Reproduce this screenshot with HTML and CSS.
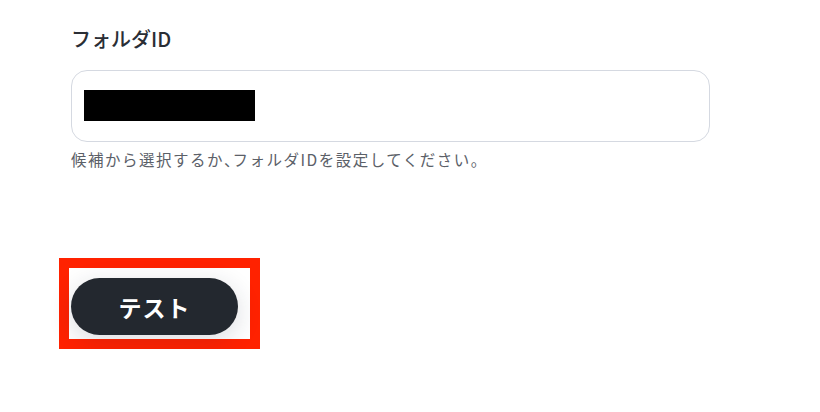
FILE: index.html
```html
<!DOCTYPE html>
<html lang="ja">
<head>
<meta charset="utf-8">
<link rel="stylesheet" href="styles.css">
</head>
<body>
<main class="page">
  <section class="field">
    <label class="field-label">フォルダID</label>
    <div class="input-box"><span class="redacted"></span></div>
    <p class="help">候補から選択するか<span class="comma">、</span>フォルダIDを設定してください。</p>
  </section>
  <div class="highlight">
    <button class="test-btn">テスト</button>
  </div>
</main>
</body>
</html>
```

FILE: styles.css
```css
html, body {
  margin: 0;
  padding: 0;
  background: #ffffff;
}
body {
  font-family: "Noto Sans CJK JP", "Noto Sans", sans-serif;
  color: #2b2f36;
}
.page {
  padding: 24px 0 0 71px;
  width: 639px;
}
.field {
  display: flex;
  flex-direction: column;
}
.field-label {
  font-size: 20px;
  line-height: 30px;
  font-weight: 500;
  color: #2a2e35;
  margin-bottom: 16px;
}
.input-box {
  box-sizing: border-box;
  height: 72px;
  border: 1px solid #d5d9e1;
  border-radius: 16px;
  padding: 19px 12px;
}
.redacted {
  display: block;
  width: 171px;
  height: 31px;
  background: #000;
}
.help {
  margin: 6px 0 0;
  font-size: 15.5px;
  line-height: 22px;
  letter-spacing: 1.5px;
  color: #5b6068;
}
.comma {
  letter-spacing: -7px;
}
.highlight {
  display: inline-block;
  margin: 88px 0 0 -12px;
  border: 10px solid #ff2200;
  padding: 10px 12px 4px 2px;
}
.test-btn {
  display: block;
  width: 167px;
  height: 57px;
  border: none;
  border-radius: 29px;
  background: #23282f;
  color: #ffffff;
  font-family: "Noto Sans CJK JP", sans-serif;
  font-size: 23px;
  font-weight: 700;
  letter-spacing: 1px;
  box-shadow: 0 6px 24px rgba(30, 40, 60, 0.16);
}
```
